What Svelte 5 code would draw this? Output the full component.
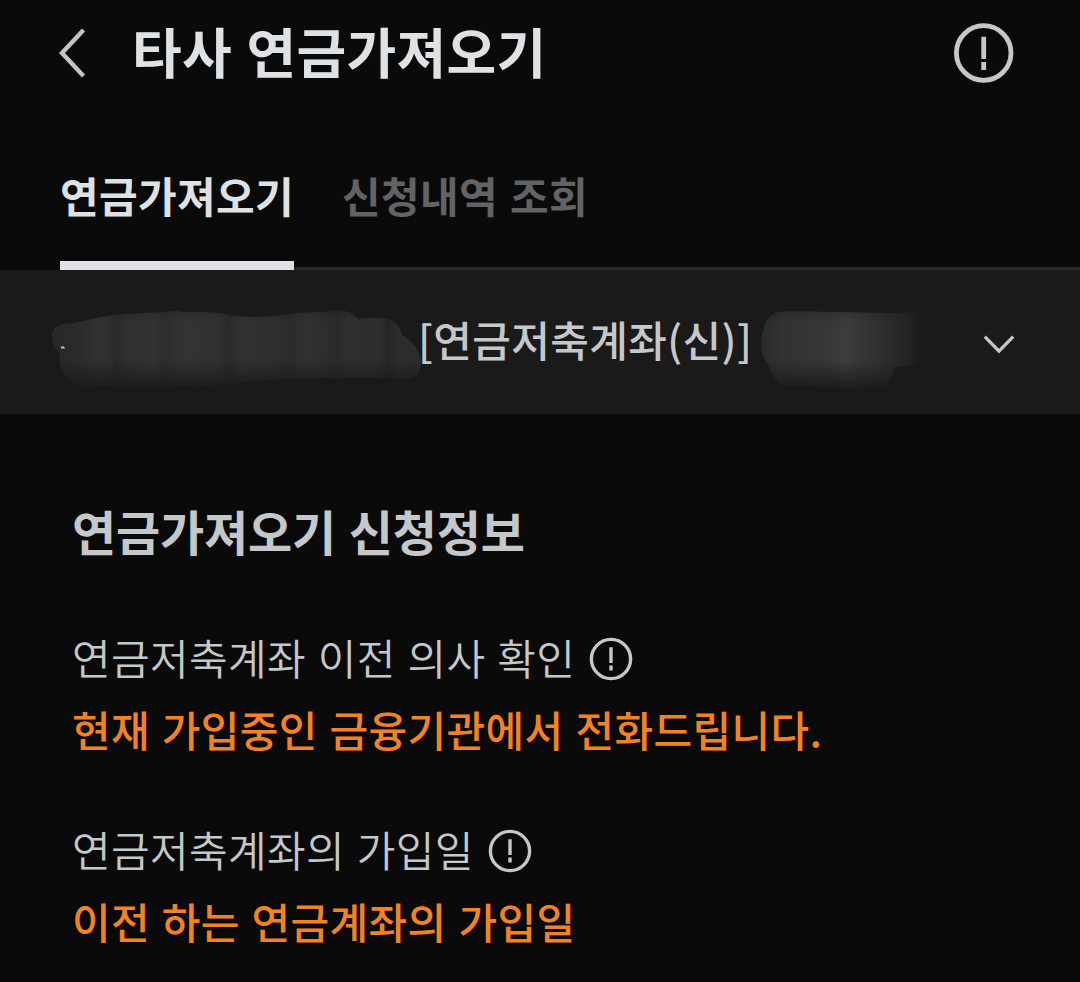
<script lang="ts">
  const tabs = [
    { label: '연금가져오기', active: true },
    { label: '신청내역 조회', active: false }
  ];
  const items = [
    { label: '연금저축계좌 이전 의사 확인', value: '현재 가입중인 금융기관에서 전화드립니다.' },
    { label: '연금저축계좌의 가입일', value: '이전 하는 연금계좌의 가입일' }
  ];
</script>

<div class="screen">
  <header>
    <svg class="back" width="30" height="54" viewBox="0 0 30 54" aria-hidden="true">
      <path d="M26.5 4 5 27 26.5 50" />
    </svg>
    <h1>타사 연금가져오기</h1>
    <svg class="info" width="60" height="60" viewBox="0 0 60 60" aria-hidden="true">
      <circle cx="29.7" cy="30" r="27.3" />
      <path d="M29.7 13.7V36M29.7 39V47" />
    </svg>
  </header>

  <nav>
    {#each tabs as tab}
      <div class="tab" class:active={tab.active}><span>{tab.label}</span></div>
    {/each}
  </nav>

  <div class="account">
    <svg class="smudges" width="1080" height="144" viewBox="0 0 1080 144" aria-hidden="true">
      <defs>
        <linearGradient id="bands" x1="0" x2="1" y1="0" y2="0">
          <stop offset="0" stop-color="#262727" />
          <stop offset=".07" stop-color="#2a2b2b" />
          <stop offset=".12" stop-color="#313131" />
          <stop offset=".155" stop-color="#303030" />
          <stop offset=".17" stop-color="#292a2a" />
          <stop offset=".2" stop-color="#2f3030" />
          <stop offset=".28" stop-color="#323333" />
          <stop offset=".3" stop-color="#2d2d2d" />
          <stop offset=".35" stop-color="#323333" />
          <stop offset=".45" stop-color="#303131" />
          <stop offset=".48" stop-color="#292a2a" />
          <stop offset=".51" stop-color="#313131" />
          <stop offset=".58" stop-color="#303030" />
          <stop offset=".65" stop-color="#2a2b2b" />
          <stop offset=".67" stop-color="#303030" />
          <stop offset=".71" stop-color="#313131" />
          <stop offset=".77" stop-color="#292a2a" />
          <stop offset=".81" stop-color="#2f2f2f" />
          <stop offset=".89" stop-color="#2d2d2d" />
          <stop offset=".91" stop-color="#252626" />
          <stop offset=".94" stop-color="#2d2d2d" />
          <stop offset="1" stop-color="#2b2c2c" />
        </linearGradient>
        <linearGradient id="tail" x1="0" x2="1" y1="0" y2="0">
          <stop offset="0" stop-color="#292a2a" />
          <stop offset=".12" stop-color="#313232" />
          <stop offset=".3" stop-color="#353636" />
          <stop offset=".38" stop-color="#373838" />
          <stop offset=".47" stop-color="#3c3d3d" />
          <stop offset=".53" stop-color="#363737" />
          <stop offset=".65" stop-color="#2e2f2f" />
          <stop offset=".8" stop-color="#222323" />
          <stop offset=".86" stop-color="#1b1b1b" />
          <stop offset="1" stop-color="#191919" />
        </linearGradient>
        <linearGradient id="fade" x1="0" x2="0" y1="0" y2="1">
          <stop offset="0" stop-color="#1a1a1a" stop-opacity=".3" />
          <stop offset=".15" stop-color="#1a1a1a" stop-opacity="0" />
          <stop offset=".64" stop-color="#1a1a1a" stop-opacity="0" />
          <stop offset="1" stop-color="#1a1a1a" stop-opacity=".9" />
        </linearGradient>
        <path id="left-shape" d="M52 66C52 58 57 55 64 54C80 53 90 48 108 46C130 43 155 43 176 41Q184 43 190 42C205 42 220 42 228 45C250 49 280 46 294 43L325 42C345 38 353 43 358 49C378 47 398 45 402 65C410 69 421 80 421 93C420 108 412 110 400 108C350 108 290 107 250 111C200 117 140 117 82 115C66 112 58 100 60 84C55 80 52 74 52 66Z" />
        <path id="right-shape" d="M778 42C800 41 820 42 834 42L890 43L930 42Q946 46 946 66Q942 92 912 95L894 98Q892 117 875 117C850 118 812 116 782 115Q771 106 769 96C759 84 760 71 763 62Q765 46 778 42Z" />
      </defs>
      <use href="#left-shape" fill="url(#bands)" />
      <use href="#left-shape" fill="url(#fade)" />
      <use href="#right-shape" fill="url(#tail)" />
      <use href="#right-shape" fill="url(#fade)" />
      <path d="M61 76.5h3v1h1v1h-4z" fill="#c5c7c9" />
    </svg>
    <span class="name">[연금저축계좌(신)]</span>
    <svg class="arrow" width="34" height="22" viewBox="0 0 34 22" aria-hidden="true">
      <path d="M2.8 3.6 17 18.2 31.2 3.6" />
    </svg>
  </div>

  <main>
    <h2>연금가져오기 신청정보</h2>
    {#each items as item}
      <section>
        <div class="label">
          <span>{item.label}</span>
          <svg class="info" width="44" height="44" viewBox="0 0 44 44" aria-hidden="true">
            <circle cx="22" cy="22" r="19.6" />
            <path d="M22 10.2V26M22 28.4V33.4" />
          </svg>
        </div>
        <p>{item.value}</p>
      </section>
    {/each}
  </main>
</div>

<style>
  :global(body) {
    margin: 0;
    background: #0a0a0a;
  }
  .screen {
    width: 1080px;
    height: 982px;
    overflow: hidden;
    background: #0a0a0a;
    color: #c5c8cb;
    font-family: 'Noto Sans CJK KR', sans-serif;
    font-size: 42px;
    letter-spacing: 0.36px;
    word-spacing: 2px;
    white-space: nowrap;
  }
  svg {
    display: block;
    flex: none;
    fill: none;
  }
  h1, h2, p {
    margin: 0;
  }
  header {
    display: flex;
    align-items: flex-start;
    height: 100px;
    padding: 0 66px 0 57px;
  }
  .back {
    margin-top: 26px;
    stroke: #c4c4c4;
    stroke-width: 4.4;
  }
  h1 {
    flex: 1;
    margin-left: 45px;
    color: #dfe2e5;
    font-size: 54px;
    font-weight: 700;
    line-height: 102px;
    letter-spacing: 0.32px;
  }
  .info {
    stroke: #c5c8cb;
    stroke-width: 4.8;
  }
  header .info {
    margin-top: 23px;
  }
  nav {
    display: flex;
    height: 170px;
    padding-left: 60px;
    gap: 48px;
    background: linear-gradient(#2a2a2a, #2a2a2a) 60px 167px / 1020px 3px no-repeat;
  }
  .tab {
    box-sizing: border-box;
    height: 170px;
    padding-top: 65px;
    border-bottom: 9px solid transparent;
    color: #626364;
    font-weight: 700;
    line-height: 60px;
  }
  .tab.active {
    width: 234px;
    border-color: #dfe1e4;
    color: #dfe2e5;
  }
  .account {
    position: relative;
    display: flex;
    align-items: flex-start;
    justify-content: space-between;
    height: 144px;
    box-sizing: border-box;
    padding: 39px 64px 0 418px;
    background: #1a1a1a;
  }
  .smudges {
    position: absolute;
    inset: 0;
  }
  .name {
    position: relative;
    font-weight: 500;
    line-height: 60px;
  }
  .arrow {
    margin-top: 24px;
    stroke: #c5c8cb;
    stroke-width: 3.2;
  }
  main {
    padding: 86px 72px 0;
  }
  h2 {
    font-size: 48px;
    font-weight: 700;
    line-height: 60px;
    letter-spacing: -0.16px;
  }
  section {
    margin-top: 60px;
    height: 132px;
  }
  h2 + section {
    margin-top: 67px;
  }
  .label {
    display: flex;
    align-items: center;
    gap: 14px;
    height: 60px;
    font-weight: 350;
    line-height: 60px;
  }
  .label .info {
    margin-top: 4px;
    stroke-width: 3.4;
  }
  p {
    margin-top: 12px;
    color: #f58220;
    font-weight: 500;
    line-height: 60px;
  }
</style>
